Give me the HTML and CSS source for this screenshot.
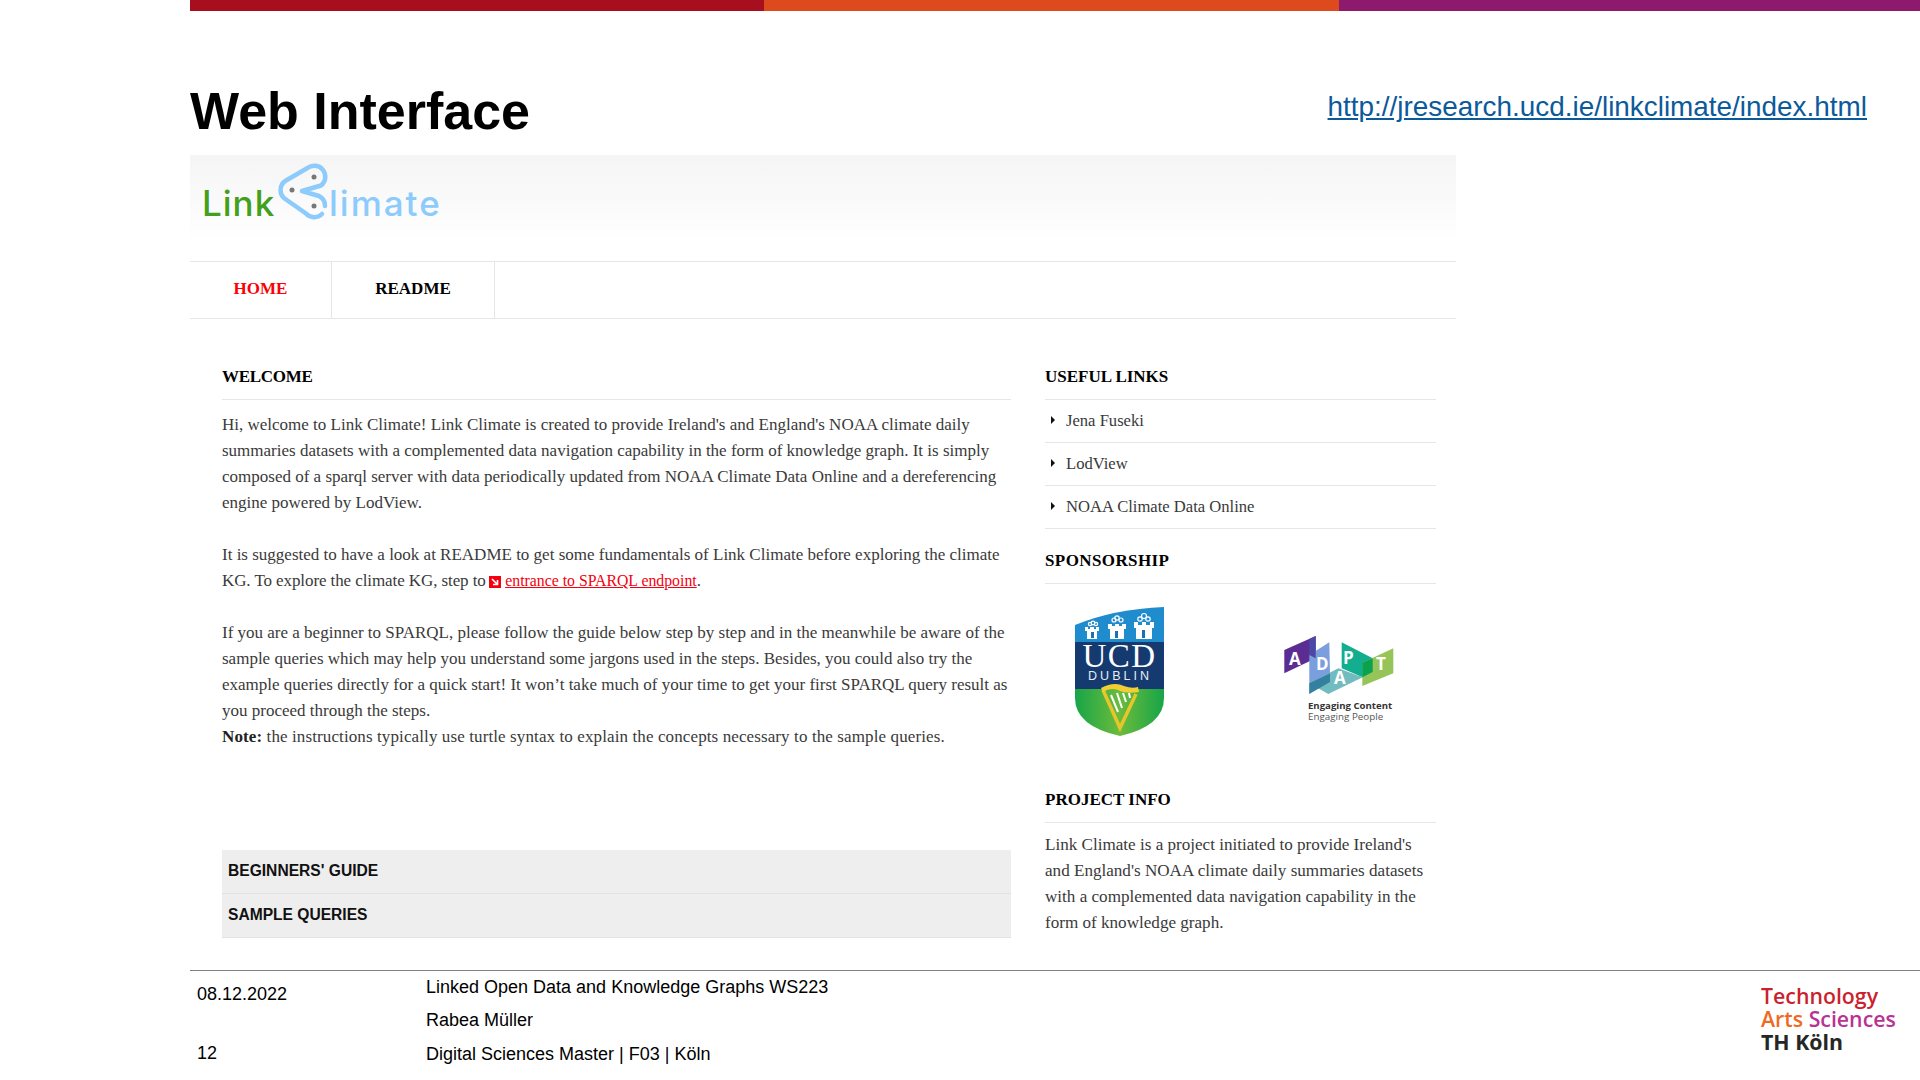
FILE: index.html
```html
<!DOCTYPE html>
<html lang="en">
<head>
    <meta charset="UTF-8">
    <title>Web Interface</title>
    <link rel="stylesheet" href="styles.css">
</head>
<body>
    <div class="slide">
        <div class="topbar">
            <div class="bar-red"></div>
            <div class="bar-orange"></div>
            <div class="bar-purple"></div>
        </div>
        <div class="title-row">
            <h1>Web Interface</h1>
            <a class="slide-link" href="#">http://jresearch.ucd.ie/linkclimate/index.html</a>
        </div>

        <div class="site">
            <div class="site-header">
                <svg class="site-logo" width="240" height="64" viewBox="0 0 240 64">
                    <text class="logo-link" x="0" y="57">Link</text>
                    <path d="M120 55 A11 11 0 0 1 104 54.5 L84 40.5 A11 11 0 0 1 84 21.5 L105.5 9 A11 11 0 0 1 119 26.5 L100 32 L117 37 A11 11 0 0 1 123 47" fill="none" stroke="#8ccbfb" stroke-width="4.5" stroke-linecap="round" stroke-linejoin="round"/>
                    <circle cx="112" cy="18" r="2.5" fill="#777"/>
                    <circle cx="90" cy="31" r="2.5" fill="#777"/>
                    <circle cx="112" cy="47" r="2.5" fill="#777"/>
                    <text class="logo-climate" x="127" y="57">limate</text>
                </svg>
            </div>
            <nav class="site-nav">
                <a class="nav-item nav-home" href="#">HOME</a>
                <a class="nav-item nav-readme" href="#">README</a>
            </nav>

            <div class="columns">
                <div class="col-main">
                    <h2 class="section-head welcome-head">WELCOME</h2>
                    <p class="welcome-text">Hi, welcome to Link Climate! Link Climate is created to provide Ireland's and England's NOAA climate daily<br>summaries datasets with a complemented data navigation capability in the form of knowledge graph. It is simply<br>composed of a sparql server with data periodically updated from NOAA Climate Data Online and a dereferencing<br>engine powered by LodView.</p>
                    <p class="welcome-text">It is suggested to have a look at README to get some fundamentals of Link Climate before exploring the climate<br><span class="tight-line">KG. To explore the climate KG, step to</span> <svg class="red-icon" width="12" height="12" viewBox="0 0 12 12"><rect width="12" height="12" fill="#f5000f"/><path d="M3 3 L8 8 M8.5 4 V8.5 H4" stroke="#fff" stroke-width="1.6" fill="none"/></svg> <a class="red-link" href="#">entrance to SPARQL endpoint</a>.</p>
                    <p class="welcome-text">If you are a beginner to SPARQL, please follow the guide below step by step and in the meanwhile be aware of the<br>sample queries which may help you understand some jargons used in the steps. Besides, you could also try the<br>example queries directly for a quick start! It won’t take much of your time to get your first SPARQL query result as<br>you proceed through the steps.<br><span class="wide-line"><b>Note:</b> the instructions typically use turtle syntax to explain the concepts necessary to the sample queries.</span></p>
                    <div class="accordion">
                        <div class="acc-item">BEGINNERS' GUIDE</div>
                        <div class="acc-item">SAMPLE QUERIES</div>
                    </div>
                </div>

                <div class="col-side">
                    <h2 class="section-head">USEFUL LINKS</h2>
                    <ul class="link-list">
                        <li>Jena Fuseki</li>
                        <li>LodView</li>
                        <li>NOAA Climate Data Online</li>
                    </ul>
                    <h2 class="section-head sponsor-head">SPONSORSHIP</h2>
                    <div class="sponsors">
                        <svg class="ucd-logo" width="92" height="132" viewBox="0 0 92 132">
                            <defs>
                                <linearGradient id="ucdGreen" x1="0" y1="0" x2="1" y2="0">
                                    <stop offset="0" stop-color="#17a548"/>
                                    <stop offset="0.5" stop-color="#6cbb3c"/>
                                    <stop offset="1" stop-color="#17a548"/>
                                </linearGradient>
                            </defs>
                            <path d="M1 19 Q40 3 90 1 V37 H1 Z" fill="#1f8ccd"/>
                            <path d="M1 82 H90 V92 Q90 120 46 130 Q1 120 1 92 Z" fill="url(#ucdGreen)"/>
                            <rect x="1" y="36" width="89" height="47" fill="#143a70"/>
                            <g fill="#fff">
                                <path d="M13 33 V25 H11 V21 H14 V23 H16 V21 H20 V23 H22 V21 H25 V25 H23 V33 Z"/>
                                <path d="M36 33 V23 H34 V18 H38 V20 H41 V18 H45 V20 H48 V18 H52 V23 H50 V33 Z"/>
                                <path d="M62 33 V22 H60 V16 H64 V19 H68 V16 H72 V19 H76 V16 H80 V22 H78 V33 Z"/>
                            </g>
                            <g fill="none" stroke="#fff" stroke-width="1.2">
                                <circle cx="16" cy="18" r="1.6"/><circle cx="19" cy="17" r="1.8"/><circle cx="22" cy="18" r="1.6"/>
                                <circle cx="40" cy="14" r="2"/><circle cx="43" cy="12" r="2.2"/><circle cx="47" cy="14" r="2"/>
                                <circle cx="66" cy="13" r="2.2"/><circle cx="70" cy="10" r="2.5"/><circle cx="74" cy="13" r="2.2"/>
                            </g>
                            <g fill="#1f6fae"><rect x="17" y="26" width="3" height="6"/><rect x="41" y="25" width="3" height="7"/><rect x="68" y="24" width="3" height="8"/></g>
                            <text class="ucd-big" x="45.5" y="61">UCD</text>
                            <text class="ucd-small" x="46" y="73.5">DUBLIN</text>
                            <path d="M29 84 L46 122 L62 88" fill="none" stroke="#e6c62a" stroke-width="3.5"/>
                            <path d="M27 82 Q40 75 50 80 Q58 83 64 81 L65 86 Q52 88 44 84 Q36 81 29 86 Z" fill="#f0cf33"/>
                            <g stroke="#fff" stroke-width="2"><path d="M37 89 L44 106 M43 87 L48 102 M49 87 L52 96 M55 87 L56 92"/></g>
                        </svg>
                        <svg class="adapt-logo" width="120" height="96" viewBox="0 0 120 96">
                            <polygon points="4.3,20 35.7,6 35.7,28.3 4.3,43.3" fill="#5b2c91"/>
                            <polygon points="29.3,25 49.3,12.3 50,43.3 29.3,64" fill="#7a9fdc"/>
                            <polygon points="29.3,9 35.7,6 35.7,28.3 29.3,25" fill="#4a4aa6"/>
                            <polygon points="29.3,53.3 58.3,38.3 82.7,47.3 48.3,64" fill="#72bcc0"/>
                            <polygon points="29.3,53.3 50,43.3 50,52 29.3,64" fill="#34809f"/>
                            <polygon points="61.7,12.3 92.7,28.3 92.7,32 82.7,47.3 61.7,38.3" fill="#13ad8f"/>
                            <polygon points="113.3,18.3 113.3,43.3 82.3,56 82.3,32.7" fill="#97c459"/>
                            <polygon points="82.3,32.7 92.7,28.3 92.7,42 82.3,47.3" fill="#0ba24f"/>
                            <text class="adapt-letter" x="9" y="35">A</text>
                            <text class="adapt-letter" x="36" y="40">D</text>
                            <text class="adapt-letter" x="63" y="34">P</text>
                            <text class="adapt-letter" x="54" y="54">A</text>
                            <text class="adapt-letter" x="96" y="40">T</text>
                            <text class="adapt-bold" x="28" y="79">Engaging Content</text>
                            <text class="adapt-thin" x="28" y="90">Engaging People</text>
                        </svg>
                    </div>
                    <h2 class="section-head">PROJECT INFO</h2>
                    <p class="project-text">Link Climate is a project initiated to provide Ireland's<br>and England's NOAA climate daily summaries datasets<br>with a complemented data navigation capability in the<br>form of knowledge graph.</p>
                </div>
            </div>
        </div>

        <footer class="slide-footer">
            <div class="foot-left">
                <span>08.12.2022</span>
                <span>12</span>
            </div>
            <div class="foot-mid">
                <span>Linked Open Data and Knowledge Graphs WS223</span>
                <span>Rabea Müller</span>
                <span class="foot-last">Digital Sciences Master | F03 | Köln</span>
            </div>
            <div class="foot-logo">
                <div class="th-red">Technology</div>
                <div><span class="th-orange">Arts</span> <span class="th-purple">Sciences</span></div>
                <div class="th-black">TH Köln</div>
            </div>
        </footer>
    </div>
</body>
</html>
```

FILE: styles.css
```css
html, body {
    margin: 0;
    padding: 0;
    background: #fff;
}

.slide {
    width: 1920px;
    height: 1080px;
    overflow: hidden;
    box-sizing: border-box;
    padding-left: 190px;
    font-family: "Liberation Sans", Arial, sans-serif;
}

.topbar {
    display: flex;
    height: 11px;
}
.bar-red { width: 574px; background-color: #a80f1e; }
.bar-orange { width: 575px; background-color: #dd4a1e; }
.bar-purple { flex: 1; background-color: #8e1a6d; }

.title-row {
    display: flex;
    justify-content: space-between;
    height: 144px;
    padding-right: 53px;
}
h1 {
    margin: 69px 0 0 0;
    font-size: 52px;
    line-height: 62px;
    font-weight: bold;
    color: #000;
}
.slide-link {
    margin-top: 79px;
    font-size: 27.9px;
    line-height: 34px;
    color: #0b5a9c;
}

.site {
    width: 1266px;
    height: 815px;
    font-family: "Liberation Serif", "Times New Roman", serif;
}

.site-header {
    height: 107px;
    box-sizing: border-box;
    padding: 4px 0 0 12px;
    background: linear-gradient(#f5f5f5, #fff 85%);
    border-bottom: 1px solid #e6e6e6;
}
.site-logo { display: block; }
.logo-link { font: 500 35px "Inter", sans-serif; fill: #43a01c; letter-spacing: 1px; }
.logo-climate { font: 500 35px "Inter", sans-serif; fill: #8ccbfb; letter-spacing: 2px; }

.site-nav {
    display: flex;
    height: 56px;
    border-bottom: 1px solid #e6e6e6;
}
.nav-item {
    display: flex;
    align-items: center;
    justify-content: center;
    padding-bottom: 2px;
    box-sizing: border-box;
    font-size: 17px;
    font-weight: bold;
    color: #000;
    text-decoration: none;
    border-right: 1px solid #e6e6e6;
}
.nav-home { width: 142px; color: #fb0007; }
.nav-readme { width: 163px; }

.columns {
    display: flex;
    padding: 45px 20px 0 32px;
}
.col-main { width: 789px; margin-right: 34px; }
.col-side { width: 391px; }

.section-head {
    margin: 0;
    height: 35px;
    font-size: 17px;
    line-height: 26px;
    font-weight: bold;
    color: #000;
    border-bottom: 1px solid #e6e6e6;
}
.welcome-head { letter-spacing: -0.3px; }

.welcome-text {
    margin: 12px 0 26px 0;
    width: 800px;
    font-size: 17px;
    line-height: 26px;
    color: #3a3a3a;
    white-space: nowrap;
}
.welcome-text + .welcome-text { margin-top: 0; }
.welcome-text b { color: #222; }
.tight-line { letter-spacing: -0.09px; }
.wide-line { letter-spacing: 0.11px; }
.red-icon { vertical-align: -2px; margin: 0 0 0 -1px; }
.red-link { color: #f5000f; font-size: 15.8px; }

.accordion { margin-top: 100px; }
.acc-item {
    height: 44px;
    box-sizing: border-box;
    padding-left: 6px;
    line-height: 42px;
    font-family: "Liberation Sans", Arial, sans-serif;
    font-size: 15.6px;
    font-weight: bold;
    color: #111;
    background-color: #eee;
    border-bottom: 1px solid #e2e2e2;
}

.link-list {
    list-style: none;
    margin: 0;
    padding: 0;
}
.link-list li {
    position: relative;
    height: 43px;
    box-sizing: border-box;
    padding-left: 21px;
    line-height: 41px;
    font-size: 16.6px;
    color: #3a3a3a;
    border-bottom: 1px solid #e6e6e6;
}
.link-list li::before {
    content: "";
    position: absolute;
    left: 6px;
    top: 16px;
    border-left: 4px solid #111;
    border-top: 4px solid transparent;
    border-bottom: 4px solid transparent;
}

.sponsor-head { margin-top: 19px; letter-spacing: 0.4px; }
.sponsors {
    display: flex;
    height: 203px;
}
.ucd-logo { margin: 22px 0 0 29px; }
.adapt-logo { margin: 46px 0 0 114px; }
.ucd-big { font: 400 33px "Liberation Serif", serif; fill: #fff; text-anchor: middle; letter-spacing: 1.5px; }
.ucd-small { font: 400 12.5px "Liberation Sans", sans-serif; fill: #e6ebf2; text-anchor: middle; letter-spacing: 3px; }
.adapt-letter { font: 700 17px "Open Sans", sans-serif; fill: #fff; }
.adapt-bold { font: 700 9.6px "Open Sans", sans-serif; fill: #333; }
.adapt-thin { font: 400 9.8px "Open Sans", sans-serif; fill: #555; }

.project-text {
    margin: 9px 0 0 0;
    font-size: 17.1px;
    line-height: 26px;
    color: #3a3a3a;
    white-space: nowrap;
}

.slide-footer {
    display: flex;
    height: 110px;
    border-top: 1px solid #7f7f7f;
    font-size: 18px;
    color: #000;
}
.foot-left {
    display: flex;
    flex-direction: column;
    width: 229px;
    padding: 12px 0 0 7px;
    gap: 37px;
    line-height: 22px;
}
.foot-mid {
    display: flex;
    flex-direction: column;
    gap: 11px;
    padding-top: 5px;
    flex: 1;
    line-height: 22px;
}
.foot-last { margin-top: 1px; }
.foot-logo {
    width: 142px;
    margin: 13px 17px 0 0;
    font-family: "Open Sans", sans-serif;
    font-size: 21.3px;
    font-weight: 600;
    line-height: 23px;
    white-space: nowrap;
}
.th-red { color: #cc1f2f; }
.th-orange { color: #ef6a23; }
.th-purple { color: #b83392; }
.th-black { color: #262626; font-weight: 700; }
```
